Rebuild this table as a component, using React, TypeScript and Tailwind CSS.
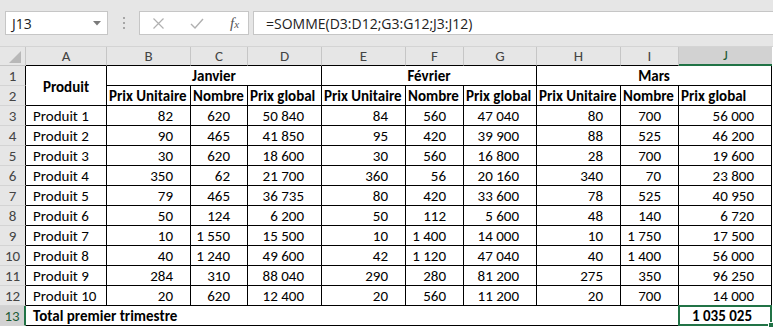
import React from "react";

const cols = ["w-[26px]", "w-[81px]", "w-[84px]", "w-[57px]", "w-[74px]", "w-[84px]", "w-[58px]", "w-[73px]", "w-[84px]", "w-[58px]", "w-[93px]"];
const letters = ["A", "B", "C", "D", "E", "F", "G", "H", "I", "J"];

const S = "\u202F";
const n = (s: string) => s.replace(" ", S);

const rows: string[][] = [
  ["Produit 1", "82", "620", "50 840", "84", "560", "47 040", "80", "700", "56 000"],
  ["Produit 2", "90", "465", "41 850", "95", "420", "39 900", "88", "525", "46 200"],
  ["Produit 3", "30", "620", "18 600", "30", "560", "16 800", "28", "700", "19 600"],
  ["Produit 4", "350", "62", "21 700", "360", "56", "20 160", "340", "70", "23 800"],
  ["Produit 5", "79", "465", "36 735", "80", "420", "33 600", "78", "525", "40 950"],
  ["Produit 6", "50", "124", "6 200", "50", "112", "5 600", "48", "140", "6 720"],
  ["Produit 7", "10", "1 550", "15 500", "10", "1 400", "14 000", "10", "1 750", "17 500"],
  ["Produit 8", "40", "1 240", "49 600", "42", "1 120", "47 040", "40", "1 400", "56 000"],
  ["Produit 9", "284", "310", "88 040", "290", "280", "81 200", "275", "350", "96 250"],
  ["Produit 10", "20", "620", "12 400", "20", "560", "11 200", "20", "700", "14 000"],
];

// row numbers and cells sit on the bottom like Excel does
const rowHead = "border-r border-b border-r-black border-b-[#d4d4d4] bg-[#e6e6e6] text-center text-[#444] p-0 pb-[1px] align-bottom";
const cell = "border-r border-b border-black p-0 pb-[1px] align-bottom whitespace-nowrap overflow-hidden";

const FormulaBar = () => (
  <div className="h-[47px] bg-[#e6e6e6] border-b border-[#d4d4d4] flex items-center pl-[5px] font-['Segoe_UI','Open_Sans',sans-serif] text-[14px] text-[#222]">
    <div className="w-[103px] h-[24px] bg-white border border-[#c6c6c6] flex items-center justify-between pl-[6px] pr-[6px]">
      <span>J13</span>
      <svg width="8" height="5" viewBox="0 0 8 5">
        <path d="M0 0H8L4 4.5Z" fill="#7a7a7a" />
      </svg>
    </div>
    <div className="w-[31px] flex flex-col items-center gap-[3px]">
      <span className="w-[2px] h-[2px] bg-[#a6a6a6]" />
      <span className="w-[2px] h-[2px] bg-[#a6a6a6]" />
      <span className="w-[2px] h-[2px] bg-[#a6a6a6]" />
    </div>
    <div className="w-[110px] h-[24px] bg-white border border-[#c6c6c6] flex items-center">
      <svg className="ml-[13px]" width="11" height="11" viewBox="0 0 11 11">
        <path d="M0.5 0.5L10.5 10.5M10.5 0.5L0.5 10.5" stroke="#b0b0b0" strokeWidth="1.2" />
      </svg>
      <svg className="ml-[26px]" width="14" height="11" viewBox="0 0 14 11">
        <path d="M1 6L5 10L13 1" stroke="#b0b0b0" strokeWidth="1.4" fill="none" />
      </svg>
      <span className="ml-[26px] font-['Liberation_Serif',serif] italic text-[15px] text-[#555] leading-none">
        f<span className="text-[11px]">x</span>
      </span>
    </div>
    <div className="flex-1 ml-[4px] h-[24px] bg-white border border-r-0 border-[#c6c6c6] flex items-center pl-[12px]">
      =SOMME(D3:D12;G3:G12;J3:J12)
    </div>
  </div>
);

export default function App() {
  return (
    <div className="w-[773px] h-[329px] overflow-hidden bg-white">
      <FormulaBar />
      <table className="table-fixed border-separate border-spacing-0 w-[772px] font-['Carlito','Lato',sans-serif] text-[15px] leading-none text-black">
        <colgroup>
          {cols.map((c, i) => (
            <col key={i} className={c} />
          ))}
        </colgroup>
        <thead>
          <tr className="h-[19px]">
            <th className="relative bg-[#e6e6e6] border-r border-b border-[#c6c6c6] p-0">
              <svg className="absolute right-[4px] bottom-[2px]" width="12" height="12" viewBox="0 0 12 12">
                <path d="M12 0V12H0Z" fill="#b8b8b8" />
              </svg>
            </th>
            {letters.map((l) =>
              l === "J" ? (
                <th key={l} className="bg-[#d2d2d2] border-b-2 border-b-[#217346] font-normal text-[#1e5c37] p-0">
                  {l}
                </th>
              ) : (
                <th key={l} className="bg-[#e6e6e6] border-r border-b border-r-[#c6c6c6] border-b-black font-normal text-[#444] p-0">
                  {l}
                </th>
              )
            )}
          </tr>
        </thead>
        <tbody>
          <tr className="h-[20px]">
            <td className={rowHead}>1</td>
            <td rowSpan={2} className="border-r border-b border-black p-0 pt-[3px] text-center font-bold">
              Produit
            </td>
            <td colSpan={3} className={`${cell} text-center font-bold`}>
              Janvier
            </td>
            <td colSpan={3} className={`${cell} text-center font-bold`}>
              Février
            </td>
            <td colSpan={3} className={`${cell} text-center font-bold`}>
              Mars
            </td>
          </tr>
          <tr className="h-[20px]">
            <td className={rowHead}>2</td>
            {["Prix Unitaire", "Nombre", "Prix global", "Prix Unitaire", "Nombre", "Prix global", "Prix Unitaire", "Nombre", "Prix global"].map((h, i) => (
              <td key={i} className={`${cell} font-bold pl-[2px]`}>
                {h}
              </td>
            ))}
          </tr>
          {rows.map((r, ri) => (
            <tr key={ri} className="h-[20px]">
              <td className={rowHead}>{ri + 3}</td>
              {r.map((v, ci) =>
                ci === 0 ? (
                  <td key={ci} className={`${cell} pl-[7px]`}>
                    {v}
                  </td>
                ) : (
                  <td key={ci} className={`${cell} text-right pr-[17px]`}>
                    {n(v)}
                  </td>
                )
              )}
            </tr>
          ))}
          <tr className="h-[20px]">
            <td className="border-r-2 border-b border-r-[#217346] border-b-[#d4d4d4] bg-[#d2d2d2] text-center text-[#1e5c37] p-0 pb-[1px] align-bottom">13</td>
            <td colSpan={9} className={`${cell} font-bold pl-[7px]`}>
              Total premier trimestre
            </td>
            <td className={`${cell} relative overflow-visible text-right font-bold pr-[19px]`}>
              {`1${S}035${S}025`}
              <div className="absolute -left-px -top-px -right-px -bottom-px border-2 border-[#217346]" />
              <div className="absolute right-[-3px] bottom-[-3px] w-[6px] h-[6px] bg-[#217346] border border-white" />
            </td>
          </tr>
        </tbody>
      </table>
    </div>
  );
}
